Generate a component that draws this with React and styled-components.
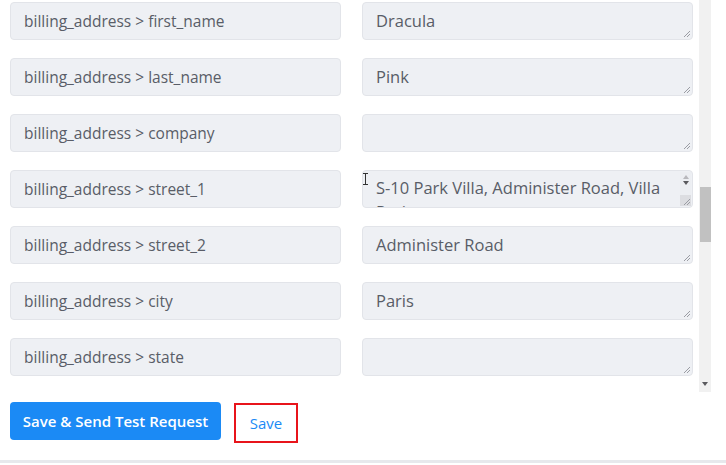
import React from "react";
import styled, { createGlobalStyle } from "styled-components";

const Global = createGlobalStyle`
  html, body { margin: 0; padding: 0; background: #ffffff; }
  body { font-family: "Open Sans", Lato, sans-serif; }
`;

const Page = styled.div`
  width: 726px;
  height: 465px;
  overflow: hidden;
  background: #fff;
  display: flex;
  flex-direction: column;
  position: relative;
`;

const ScrollRegion = styled.div`
  height: 392px;
  display: flex;
  flex-direction: row;
  overflow: hidden;
`;

const Fields = styled.div`
  width: 699px;
  padding: 2px 6px 0 10px;
  box-sizing: border-box;
  display: grid;
  grid-template-columns: 331px 331px;
  column-gap: 21px;
  row-gap: 18px;
  align-content: start;
`;

const KeyField = styled.div`
  height: 38px;
  box-sizing: border-box;
  border: 1px solid #e2e4e9;
  border-radius: 4px;
  background: #eef0f4;
  display: flex;
  align-items: center;
  padding: 0 13px 1px;
  font-size: 15.5px;
  color: #595d67;
  white-space: nowrap;
`;

const ValueField = styled.div`
  height: 38px;
  box-sizing: border-box;
  border: 1px solid #e2e4e9;
  border-radius: 4px;
  background: #eef0f4;
  position: relative;
  overflow: hidden;
  padding: ${(p) => (p.$scrolled ? "5px 30px 0 13px" : "6px 13px 0")};
  font-size: 16.5px;
  line-height: 24px;
  color: #595d67;
`;

const Line = styled.div`
  white-space: nowrap;
`;

const Handle = styled.svg`
  position: absolute;
  right: 1px;
  bottom: 1px;
  width: 9px;
  height: 9px;
`;

const MiniBar = styled.div`
  position: absolute;
  right: 1px;
  top: 1px;
  bottom: 1px;
  width: 11px;
  background: #eceef2;
  display: flex;
  flex-direction: column;
  align-items: center;
  padding-top: 3px;
  gap: 2px;
`;

const MiniCorner = styled.div`
  position: absolute;
  right: 1px;
  bottom: 1px;
  width: 11px;
  height: 11px;
  background: #dcdde1;
`;

const Tri = styled.div`
  width: 0;
  height: 0;
  border-left: 3px solid transparent;
  border-right: 3px solid transparent;
  ${(p) =>
    p.$up
      ? "border-bottom: 4px solid #b8b8bc;"
      : "border-top: 4px solid #5a5a5e;"}
`;

const Track = styled.div`
  width: 12px;
  background: #f1f1f1;
  position: relative;
  display: flex;
  flex-direction: column;
  justify-content: flex-end;
  align-items: center;
  padding-bottom: 6px;
  box-sizing: border-box;
`;

const Thumb = styled.div`
  position: absolute;
  left: 1px;
  right: 0;
  top: 187px;
  height: 55px;
  background: #c1c1c1;
`;

const Footer = styled.div`
  flex: 1;
  display: flex;
  align-items: flex-start;
  gap: 13px;
  padding: 10px 0 0 10px;
  border-bottom: 3px solid #e7e8ec;
  margin-bottom: 2px;
`;

const PrimaryButton = styled.button`
  height: 38px;
  width: 211px;
  border: none;
  border-radius: 4px;
  background: #1b8af5;
  color: #fff;
  font-family: "Open Sans", Lato, sans-serif;
  font-size: 15px;
  font-weight: 600;
  padding: 0;
  cursor: pointer;
`;

const LinkButton = styled.button`
  height: 40px;
  width: 64px;
  margin-top: 1px;
  border: 2.5px solid #e8141b;
  background: #fff;
  color: #1b8af5;
  font-family: "Open Sans", Lato, sans-serif;
  font-size: 15px;
  padding: 0;
`;

const Cursor = styled.svg`
  position: absolute;
  left: 362px;
  top: 173px;
  width: 7px;
  height: 12px;
`;

const rows = [
  ["first_name", "Dracula"],
  ["last_name", "Pink"],
  ["company", ""],
  ["street_1", null],
  ["street_2", "Administer Road"],
  ["city", "Paris"],
  ["state", ""],
];

function ResizeHandle() {
  return (
    <Handle viewBox="0 0 9 9">
      <line x1="8" y1="2" x2="2" y2="8" stroke="#9a9ca3" strokeWidth="1" />
      <line x1="8" y1="5" x2="5" y2="8" stroke="#9a9ca3" strokeWidth="1" />
    </Handle>
  );
}

export default function App() {
  return (
    <>
      <Global />
      <Page>
        <ScrollRegion>
          <Fields>
            {rows.map(([key, val]) => (
              <React.Fragment key={key}>
                <KeyField>billing_address &gt; {key}</KeyField>
                {val === null ? (
                  <ValueField $scrolled>
                    <Line>S-10 Park Villa, Administer Road, Villa</Line>
                    <Line>Paris</Line>
                    <MiniBar>
                      <Tri $up />
                      <Tri />
                    </MiniBar>
                    <MiniCorner />
                    <ResizeHandle />
                  </ValueField>
                ) : (
                  <ValueField>
                    {val}
                    <ResizeHandle />
                  </ValueField>
                )}
              </React.Fragment>
            ))}
          </Fields>
          <Track>
            <Thumb />
            <Tri />
          </Track>
        </ScrollRegion>
        <Footer>
          <PrimaryButton>Save &amp; Send Test Request</PrimaryButton>
          <LinkButton>Save</LinkButton>
        </Footer>
        <Cursor viewBox="0 0 7 12">
          <path d="M1 0.5h5M3.5 0.5v11M1 11.5h5" stroke="#333" strokeWidth="1" fill="none" />
        </Cursor>
      </Page>
    </>
  );
}
